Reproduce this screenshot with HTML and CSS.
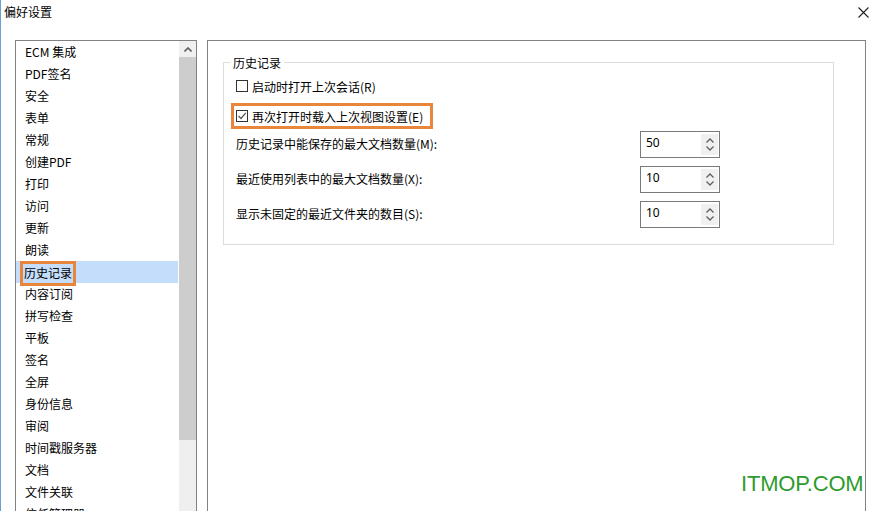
FILE: index.html
```html
<!DOCTYPE html>
<html lang="zh">
<head>
<meta charset="utf-8">
<title>偏好设置</title>
<link rel="stylesheet" href="styles.css">
</head>
<body>
<div class="window">
  <div class="titlebar">
    <span class="title">偏好设置</span>
    <svg class="close" width="11" height="11" viewBox="0 0 11 11"><path d="M0.5 0.5 L10.5 10.5 M10.5 0.5 L0.5 10.5" stroke="#222" stroke-width="1.1" fill="none"/></svg>
  </div>
  <div class="main">
    <div class="listbox">
      <ul class="items">
        <li>ECM 集成</li>
        <li>PDF签名</li>
        <li>安全</li>
        <li>表单</li>
        <li>常规</li>
        <li>创建PDF</li>
        <li>打印</li>
        <li>访问</li>
        <li>更新</li>
        <li>朗读</li>
        <li class="selected"><span class="mark">历史记录</span></li>
        <li>内容订阅</li>
        <li>拼写检查</li>
        <li>平板</li>
        <li>签名</li>
        <li>全屏</li>
        <li>身份信息</li>
        <li>审阅</li>
        <li>时间戳服务器</li>
        <li>文档</li>
        <li>文件关联</li>
        <li>信任管理器</li>
      </ul>
      <div class="scrollbar">
        <div class="sb-btn">
          <svg width="8" height="5" viewBox="0 0 8 5"><path d="M0.5 4.5 L4 1 L7.5 4.5" stroke="#606060" stroke-width="1.6" fill="none"/></svg>
        </div>
        <div class="sb-thumb"></div>
        <div class="sb-track"></div>
      </div>
    </div>
    <div class="panel">
      <div class="group">
        <span class="legend">历史记录</span>
        <div class="check-row">
          <span class="cbox"></span>
          <span>启动时打开上次会话(R)</span>
        </div>
        <div class="check-row hl">
          <span class="cbox">
            <svg width="10" height="10" viewBox="0 0 10 10"><path d="M1.5 5 L4 7.5 L8.8 1.8" stroke="#555" stroke-width="1.2" fill="none"/></svg>
          </span>
          <span>再次打开时载入上次视图设置(E)</span>
        </div>
        <div class="spin-grid">
          <span class="label">历史记录中能保存的最大文档数量(M):</span>
          <div class="spin"><span class="val">50</span><span class="arrows"><svg width="8" height="5" viewBox="0 0 8 5"><path d="M0.5 4.5 L4 1 L7.5 4.5" stroke="#606060" stroke-width="1.3" fill="none"/></svg><svg width="8" height="5" viewBox="0 0 8 5"><path d="M0.5 0.5 L4 4 L7.5 0.5" stroke="#606060" stroke-width="1.3" fill="none"/></svg></span></div>
          <span class="label">最近使用列表中的最大文档数量(X):</span>
          <div class="spin"><span class="val">10</span><span class="arrows"><svg width="8" height="5" viewBox="0 0 8 5"><path d="M0.5 4.5 L4 1 L7.5 4.5" stroke="#606060" stroke-width="1.3" fill="none"/></svg><svg width="8" height="5" viewBox="0 0 8 5"><path d="M0.5 0.5 L4 4 L7.5 0.5" stroke="#606060" stroke-width="1.3" fill="none"/></svg></span></div>
          <span class="label">显示未固定的最近文件夹的数目(S):</span>
          <div class="spin"><span class="val">10</span><span class="arrows"><svg width="8" height="5" viewBox="0 0 8 5"><path d="M0.5 4.5 L4 1 L7.5 4.5" stroke="#606060" stroke-width="1.3" fill="none"/></svg><svg width="8" height="5" viewBox="0 0 8 5"><path d="M0.5 0.5 L4 4 L7.5 0.5" stroke="#606060" stroke-width="1.3" fill="none"/></svg></span></div>
        </div>
      </div>
    </div>
  </div>
  <div class="watermark">ITMOP.COM</div>
</div>
</body>
</html>
```

FILE: styles.css
```css
* { box-sizing: border-box; }
html, body {
  margin: 0;
  padding: 0;
  background: #fff;
}
body {
  font-family: "Microsoft YaHei", "Noto Sans CJK SC", "Noto Sans", sans-serif;
  font-size: 12px;
  color: #000;
}
.window {
  position: relative;
  width: 870px;
  height: 511px;
  overflow: hidden;
  border-left: 1px solid #6aa0d8;
  background: #fff;
}
.titlebar {
  height: 24px;
  display: flex;
  align-items: center;
  justify-content: space-between;
  padding: 0 0 0 3px;
}
.title {
  line-height: 24px;
}
.close {
  margin-right: 1px;
  margin-top: 0;
}
.main {
  display: flex;
  padding: 16px 0 0 14px;
  height: 487px;
}
.listbox {
  width: 182px;
  flex: none;
  border: 1px solid #828282;
  border-bottom: none;
  display: flex;
  height: 480px;
}
.items {
  list-style: none;
  margin: 0;
  padding: 0 0 0 1px;
  flex: 1;
  overflow: hidden;
}
.items li {
  height: 22px;
  line-height: 22px;
  padding-left: 8px;
  white-space: nowrap;
}
.items li.selected {
  background: #c4ddfb;
  margin-left: -1px;
  padding-left: 9px;
  margin-right: 1px;
}
.mark {
  display: inline-block;
  vertical-align: top;
  height: 25px;
  line-height: 18px;
  border: 3px solid #e8863c;
  padding: 0 1px;
  margin-left: -5px;
}
.scrollbar {
  width: 17px;
  flex: none;
  display: flex;
  flex-direction: column;
  background: #efefef;
}
.sb-btn {
  height: 16px;
  display: flex;
  align-items: center;
  justify-content: center;
  background: #f0f0f0;
}
.sb-thumb {
  height: 383px;
  background: #cdcdcd;
}
.sb-track {
  flex: 1;
}
.panel {
  margin-left: 10px;
  width: 659px;
  flex: none;
  border: 1px solid #828282;
  border-bottom: none;
  height: 480px;
  padding: 21px 0 0 15px;
}
.group {
  width: 611px;
  border: 1px solid #dcdcdc;
  padding: 0 0 16px 12px;
}
.legend {
  display: block;
  width: max-content;
  height: 16px;
  line-height: 16px;
  margin: -8px 0 0 -6px;
  padding: 0 3px;
  background: #fff;
}
.check-row {
  display: flex;
  align-items: center;
  height: 22px;
  margin-top: 4px;
  white-space: nowrap;
}
.check-row.hl {
  width: 202px;
  height: 26px;
  margin-top: 6px;
  margin-left: -5px;
  border: 3px solid #e8863c;
  padding-left: 2px;
}
.cbox {
  width: 12px;
  height: 12px;
  border: 1px solid #333;
  margin-right: 4px;
  display: flex;
  align-items: center;
  justify-content: center;
  background: #fff;
  flex: none;
}
.spin-grid {
  display: grid;
  grid-template-columns: 404px 80px;
  row-gap: 8px;
  margin-top: 2px;
  align-items: center;
}
.label {
  white-space: nowrap;
  margin-top: -2px;
}
.spin {
  height: 27px;
  border: 1px solid #7a7a7a;
  display: flex;
  justify-content: space-between;
  padding: 2px 1px 2px 5px;
}
.val {
  line-height: 18px;
  font-family: "Noto Sans", "Liberation Sans", sans-serif;
  font-size: 12px;
}
.arrows {
  width: 17px;
  background: #f0f0f0;
  display: flex;
  flex-direction: column;
  align-items: center;
  justify-content: space-around;
  padding: 2px 0;
}
.watermark {
  position: absolute;
  left: 740px;
  top: 471px;
  font-family: "Liberation Sans", Arial, sans-serif;
  font-size: 22px;
  color: #2e9b2e;
  letter-spacing: -0.2px;
}
```
